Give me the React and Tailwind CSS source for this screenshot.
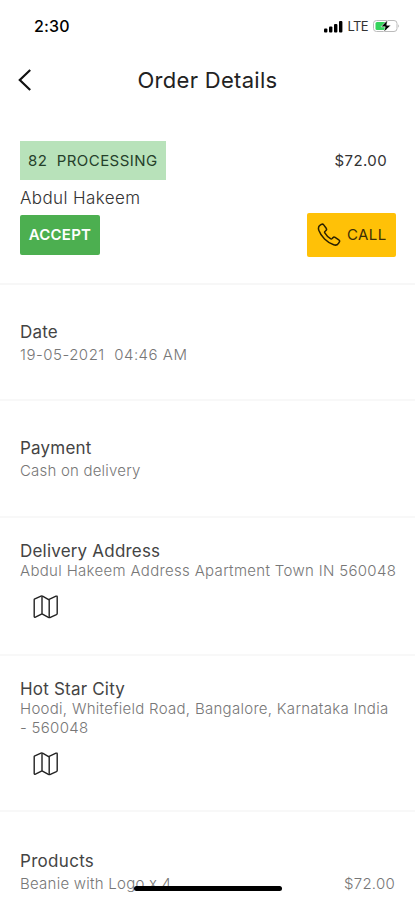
import React from "react";

const MapIcon = () => (
  <svg width="26" height="24" viewBox="0 0 26 24" fill="none" stroke="#222" strokeWidth="1.4" strokeLinejoin="round">
    <path d="M1.3 4.2 8 1.2C8.8.9 9.3 1 10 1.4L15.6 4.6 23 1.2C23.8.9 24.2 1.2 24.2 2V18.4C24.2 19 24 19.3 23.4 19.6L17.4 22.4C16.6 22.8 16 22.7 15.4 22.4L9 18.8 2.4 22.2C1.7 22.5 1.2 22.2 1.2 21.5V5.4C1.2 4.8 1.2 4.5 1.3 4.2Z" />
    <path d="M9 1.4V18.8M16.2 4.6V22.4" />
  </svg>
);

const PhoneIcon = () => (
  <svg width="24" height="24" viewBox="0 0 24 24" fill="none" stroke="#2b2100" strokeWidth="1.5" strokeLinejoin="round">
    <path d="M3.2 2.2 4.4 1.4C5.3.9 6.1 1.1 6.7 1.9L9.2 5.3C9.8 6.2 9.7 6.9 9 7.5L8.1 8.3C7.5 8.8 7.4 9.3 7.8 9.9 9 11.9 11.3 14.3 13.5 15.7 14.2 16.2 14.7 16 15.2 15.5L15.9 14.7C16.5 14 17.3 13.9 18.1 14.4L21.8 16.8C22.7 17.4 22.9 18.1 22.4 18.9L21.5 20.3C20.4 22 18.7 22.5 16.7 21.8 10 19.5 4 13.4 1.8 7.3 1.1 5.2 1.5 3.3 3.2 2.2Z" />
  </svg>
);

const StatusBar = () => (
  <div className="flex h-[52px] items-center justify-between pl-[34px] pr-[15px]">
    <span className="text-[16px] font-medium tracking-[0.2px] text-black">2:30</span>
    <div className="flex items-center">
      <svg width="20" height="13" viewBox="0 0 20 13" fill="#000">
        <rect x="1" y="8.5" width="3.4" height="4" rx="1" />
        <rect x="6" y="6.5" width="3.4" height="6" rx="1" />
        <rect x="11" y="4" width="3.4" height="8.5" rx="1" />
        <rect x="16" y="1" width="3.4" height="11.5" rx="1" />
      </svg>
      <span className="ml-1 text-[13px] leading-none tracking-[-0.6px] text-[#333]">LTE</span>
      <svg className="ml-1" width="28" height="14" viewBox="0 0 28 14" fill="none">
        <rect x="1.5" y="1.5" width="23.5" height="11" rx="3" stroke="#bbb" />
        <path d="M5 3H15V11H5Q3.5 11 3.5 9.5V4.5Q3.5 3 5 3Z" fill="#35d45c" />
        <path d="M26.3 5.2Q28 7 26.3 8.8Z" fill="#aaa" />
        <path d="M15.5 1 9 7.8H13.2L11.8 13 19 6.2H14.7Z" fill="#000" stroke="#fff" strokeWidth=".6" />
      </svg>
    </div>
  </div>
);

const sections = [
  { title: "Date", text: "19-05-2021  04:46 AM", box: "h-[116px] pt-[37px]", line: "leading-[25px]", spacing: "tracking-[0.5px]" },
  { title: "Payment", text: "Cash on delivery", box: "h-[117px] pt-[37px]", line: "leading-[26px]", spacing: "tracking-[0.2px]" },
  { title: "Delivery Address", text: "Abdul Hakeem Address Apartment Town IN 560048", box: "h-[138px] pt-[23px]", line: "leading-[19px]", spacing: "tracking-[0.32px]", map: true },
  { title: "Hot Star City", text: "Hoodi, Whitefield Road, Bangalore, Karnataka India - 560048", box: "h-[156px] pt-[23px]", line: "leading-[19px]", spacing: "tracking-[0.29px]", map: true },
];

export default function App() {
  return (
    <div className="relative h-[900px] w-full max-w-[415px] overflow-hidden bg-white font-['Inter',sans-serif]">
      <StatusBar />
      <header className="grid h-[56px] grid-cols-[56px_1fr_56px] items-center">
        <svg className="ml-[17px]" width="16" height="24" viewBox="0 0 16 24" fill="none" stroke="#111" strokeWidth="2.2">
          <path d="M13.2 2 2.8 12 13.2 22" />
        </svg>
        <h1 className="text-center text-[22px] tracking-[0.3px] text-[#222]">Order Details</h1>
      </header>

      <section className="flex h-[177px] justify-between border-b-2 border-[#f7f7f7] pl-5 pr-[19px] pt-[33px]">
        <div className="flex flex-col items-start">
          <div className="flex h-[39px] w-[146px] items-center whitespace-pre bg-[#b8e2ba] pl-2 pt-px text-[15px] tracking-[0.45px] text-[#25402a]">82  PROCESSING</div>
          <p className="mt-[7px] text-[17px] font-light leading-[22px] tracking-[0.4px] text-[#333]">Abdul Hakeem</p>
          <button className="mt-[6px] h-10 w-20 rounded-[2px] bg-[#4caf50] text-[15px] font-semibold tracking-[0.2px] text-white">ACCEPT</button>
        </div>
        <div className="flex flex-col items-end">
          <span className="mr-[9px] flex h-[39px] items-center pt-px text-[15px] tracking-[0.4px] text-[#333]">$72.00</span>
          <button className="mt-[33px] flex h-11 w-[89px] items-center gap-[6px] rounded-[2px] bg-[#ffc107] pl-[10px] text-[15px] tracking-[0.4px] text-[#3d2f06]">
            <PhoneIcon />
            CALL
          </button>
        </div>
      </section>

      {sections.map((item) => (
        <section key={item.title} className={`border-b-2 border-[#f8f8f8] px-5 ${item.box}`}>
          <h2 className="text-[17px] leading-[20px] tracking-[0.2px] text-[#444]">{item.title}</h2>
          <p className={`-mr-[3px] whitespace-pre-wrap text-[15px] font-light text-[#777] ${item.line} ${item.spacing}`}>{item.text}</p>
          {item.map && (
            <div className="ml-[13px] mt-[15px]">
              <MapIcon />
            </div>
          )}
        </section>
      ))}

      <section className="px-5 pt-[38px]">
        <h2 className="text-[17px] leading-[22px] tracking-[0.3px] text-[#444]">Products</h2>
        <div className="flex justify-between text-[15px] font-light leading-[23px] tracking-[0.25px] text-[#777]">
          <span>Beanie with Logo x 4</span>
          <span>$72.00</span>
        </div>
      </section>

      <div className="absolute bottom-[9px] left-[134px] h-[5px] w-[148px] rounded-full bg-black" />
    </div>
  );
}
